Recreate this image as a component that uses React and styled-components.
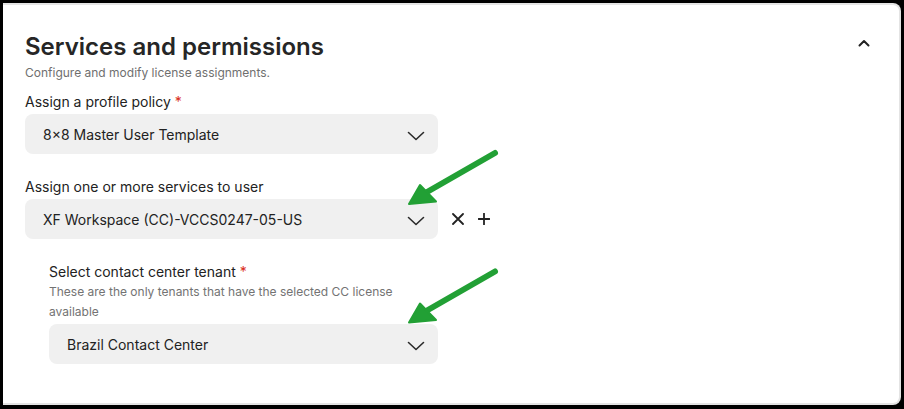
import React from 'react';
import styled, { createGlobalStyle } from 'styled-components';

const GlobalStyle = createGlobalStyle`
  html, body {
    margin: 0;
    padding: 0;
    background: #000;
  }
  * { box-sizing: border-box; }
`;

const Screen = styled.div`
  position: relative;
  width: 904px;
  height: 409px;
  background: #000;
  padding: 3px 3px 4px 3px;
  font-family: Inter, "Noto Sans", sans-serif;
`;

const Frame = styled.div`
  height: 100%;
  background: #e4e4e4;
  padding: 2px 2px 2px 0;
  border-radius: 0 8px 8px 0;
`;

const Card = styled.div`
  height: 100%;
  background: #fff;
  border-radius: 0 6px 6px 0;
  padding: 27px 29px 0 22px;
  display: flex;
  flex-direction: column;
`;

const Header = styled.div`
  display: flex;
  align-items: flex-start;
  justify-content: space-between;
`;

const Title = styled.h2`
  margin: 0;
  font-size: 24px;
  line-height: 30px;
  font-weight: 600;
  color: #262626;
`;

const Collapse = styled.button`
  border: none;
  background: none;
  padding: 0;
  margin-top: 6px;
  width: 12px;
  height: 10px;
  display: flex;
  align-items: center;
  justify-content: center;
  color: #222;
`;

const Subtitle = styled.p`
  margin: 3px 0 0;
  font-size: 12px;
  line-height: 16px;
  color: #6f6f6f;
`;

const Field = styled.div`
  display: flex;
  flex-direction: column;
  margin-top: ${p => p.$top}px;
  padding-left: ${p => (p.$nested ? 24 : 0)}px;
  width: ${p => (p.$nested ? 413 : 'auto')}px;
`;

const Label = styled.label`
  font-size: 14px;
  line-height: 20px;
  color: #222;
`;

const Required = styled.span`
  color: #d92d20;
  margin-left: 4px;
`;

const Hint = styled.p`
  margin: 0;
  max-width: 360px;
  font-size: 12px;
  line-height: 20px;
  color: #737373;
`;

const Row = styled.div`
  display: flex;
  align-items: center;
  gap: 14px;
  margin-top: ${p => p.$top}px;
`;

const Select = styled.div`
  width: ${p => p.$width}px;
  height: 40px;
  background: #f0f0f0;
  border-radius: 8px;
  display: flex;
  align-items: center;
  justify-content: space-between;
  padding: 0 13px 0 18px;
  font-size: 14px;
  color: #222;
`;

const Chevron = styled.svg`
  margin-top: 3px;
  color: #2a2a2a;
`;

const Actions = styled.div`
  display: flex;
  align-items: center;
  gap: 14px;
  color: #222;
`;

const Overlay = styled.svg`
  position: absolute;
  top: 0;
  left: 0;
  pointer-events: none;
`;

const ChevronDown = () => (
  <Chevron width="18" height="10" viewBox="0 0 18 10" fill="none">
    <path d="M1.5 1.5 L9 8.5 L16.5 1.5" stroke="currentColor" strokeWidth="1.6" strokeLinecap="round" strokeLinejoin="round" />
  </Chevron>
);

const Arrow = ({ dy }) => (
  <g transform={`translate(0 ${dy})`} fill="#22a035" stroke="#22a035">
    <line x1="495" y1="153" x2="427" y2="192" strokeWidth="6" strokeLinecap="round" />
    <polygon points="409,204 420,185 436,201.5" strokeWidth="2" strokeLinejoin="round" />
  </g>
);

export default function App() {
  return (
    <>
      <GlobalStyle />
      <Screen>
        <Frame>
          <Card>
            <Header>
              <Title>Services and permissions</Title>
              <Collapse aria-label="collapse">
                <svg width="12" height="8" viewBox="0 0 12 8" fill="none">
                  <path d="M1.5 6.5 L6 2 L10.5 6.5" stroke="currentColor" strokeWidth="2" strokeLinecap="round" strokeLinejoin="round" />
                </svg>
              </Collapse>
            </Header>
            <Subtitle>Configure and modify license assignments.</Subtitle>

            <Field $top={11}>
              <Label>Assign a profile policy<Required>*</Required></Label>
              <Row $top={2}>
                <Select $width={413}>
                  <span>8×8 Master User Template</span>
                  <ChevronDown />
                </Select>
              </Row>
            </Field>

            <Field $top={23}>
              <Label>Assign one or more services to user</Label>
              <Row $top={2}>
                <Select $width={413}>
                  <span>XF Workspace (CC)-VCCS0247-05-US</span>
                  <ChevronDown />
                </Select>
                <Actions>
                  <svg width="12" height="12" viewBox="0 0 12 12" fill="none">
                    <path d="M1 1 L11 11 M11 1 L1 11" stroke="currentColor" strokeWidth="1.8" strokeLinecap="round" />
                  </svg>
                  <svg width="12" height="12" viewBox="0 0 12 12" fill="none">
                    <path d="M6 0.5 V11.5 M0.5 6 H11.5" stroke="currentColor" strokeWidth="1.8" strokeLinecap="round" />
                  </svg>
                </Actions>
              </Row>
            </Field>

            <Field $top={23} $nested>
              <Label>Select contact center tenant<Required>*</Required></Label>
              <Hint>These are the only tenants that have the selected CC license available</Hint>
              <Row $top={2}>
                <Select $width={389}>
                  <span>Brazil Contact Center</span>
                  <ChevronDown />
                </Select>
              </Row>
            </Field>
          </Card>
        </Frame>
        <Overlay width="904" height="409" viewBox="0 0 904 409">
          <Arrow dy={0} />
          <Arrow dy={118.5} />
        </Overlay>
      </Screen>
    </>
  );
}
